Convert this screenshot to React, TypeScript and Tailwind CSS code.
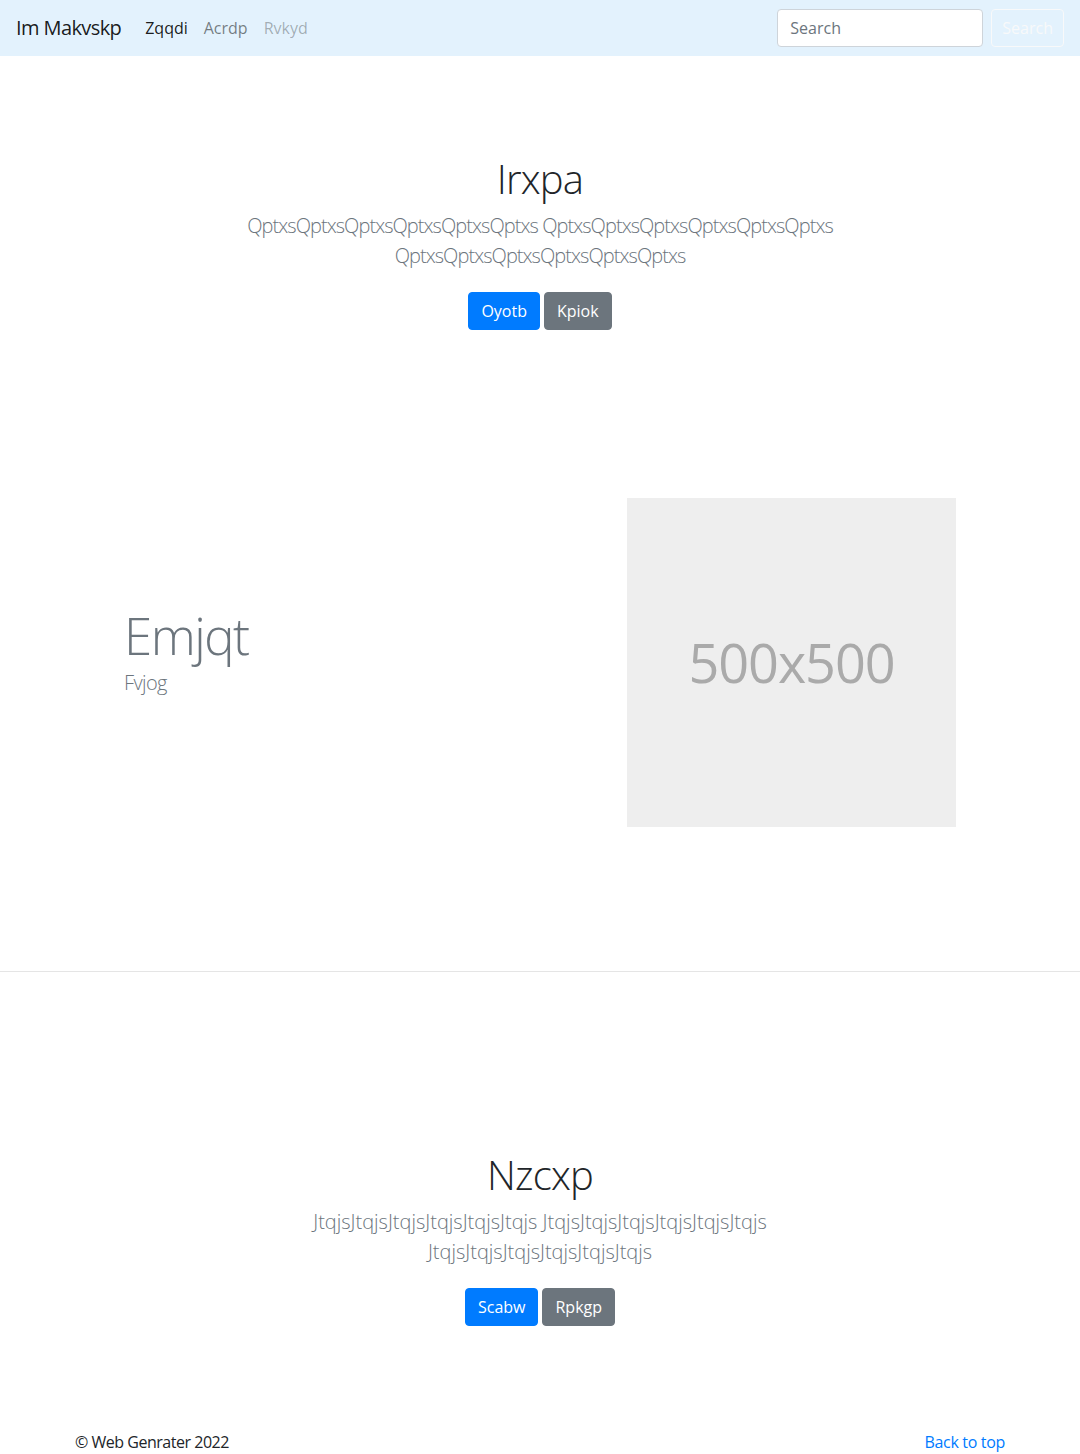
import React from "react";

const font = { fontFamily: '"Open Sans", "Noto Sans", "Liberation Sans", sans-serif' };

// Simple bootstrap-ish button
function Btn({ label, kind }: { label: string; kind: "primary" | "secondary" }) {
  const color = kind === "primary" ? "bg-[#007bff] border-[#007bff]" : "bg-[#6c757d] border-[#6c757d]";
  return (
    <a href="#" className={`inline-block h-[38px] px-3 leading-[36px] text-base text-white rounded border ${color}`}>
      {label}
    </a>
  );
}

function Hero({ title, text, buttons, tight }: { title: string; text: string; buttons: [string, string]; tight?: boolean }) {
  const word = text.repeat(6);
  return (
    <div className="flex flex-col items-center text-center">
      <h1 className="text-[40px] leading-[48px] font-light text-[#212529] tracking-[-0.02em]">{title}</h1>
      <p className={`mt-2 max-w-[650px] text-xl leading-[30px] font-light text-[#6c757d] ${tight ? "tracking-[-0.047em]" : ""}`}>
        {word} {word} {word}
      </p>
      <div className="mt-[21px] flex gap-1">
        <Btn label={buttons[0]} kind="primary" />
        <Btn label={buttons[1]} kind="secondary" />
      </div>
    </div>
  );
}

export default function App() {
  return (
    <div className="min-h-[1454px] bg-white text-[#212529]" style={font}>
      {/* navbar */}
      <nav className="h-14 bg-[#e3f2fd] flex items-center px-4">
        <a href="#" className="text-xl text-black/90 mr-6 tracking-[-0.03em]">Im Makvskp</a>
        <ul className="flex gap-4 text-base">
          <li className="text-black/90">Zqqdi</li>
          <li className="text-black/50">Acrdp</li>
          <li className="text-black/30">Rvkyd</li>
        </ul>
        <form className="ml-auto flex items-center gap-2">
          <input
            placeholder="Search"
            className="w-[206px] h-[38px] px-3 rounded border border-[#ced4da] bg-white text-base placeholder:text-[#6c757d] outline-none"
          />
          <button type="button" className="h-[38px] px-[10px] rounded border border-[#f8f9fa] text-[#f8f9fa] text-base">
            Search
          </button>
        </form>
      </nav>

      <section className="pt-[99px]">
        <Hero title="Irxpa" text="Qptxs" buttons={["Oyotb", "Kpiok"]} tight />
      </section>

      <section className="mx-auto w-[960px] px-[15px] pt-[168px] pb-[144px] flex items-center">
        <div className="flex-1 pl-[49px] pb-[21px]">
          <h2 className="text-[51px] leading-[58px] font-light text-[#6c757d] tracking-[-0.03em]">Emjqt</h2>
          <p className="mt-1 text-xl leading-[30px] font-light text-[#6c757d] tracking-[-0.03em]">Fvjog</p>
        </div>
        <div className="w-[329px] h-[329px] mr-[49px] bg-[#eeeeee] flex items-center justify-center text-[54px] text-[#aaaaaa] tracking-[-0.02em]">
          500x500
        </div>
      </section>

      <hr className="border-0 border-t border-[#e5e5e5]" />

      <section className="pt-[179px]">
        <Hero title="Nzcxp" text="Jtqjs" buttons={["Scabw", "Rpkgp"]} />
      </section>

      <footer className="mx-auto w-[960px] px-[15px] pt-[104px] flex justify-between items-end text-base">
        <p className="text-[#212529] tracking-[-0.03em]">© Web Genrater 2022</p>
        <a href="#" className="text-[#007bff] tracking-[-0.02em]">Back to top</a>
      </footer>
    </div>
  );
}
